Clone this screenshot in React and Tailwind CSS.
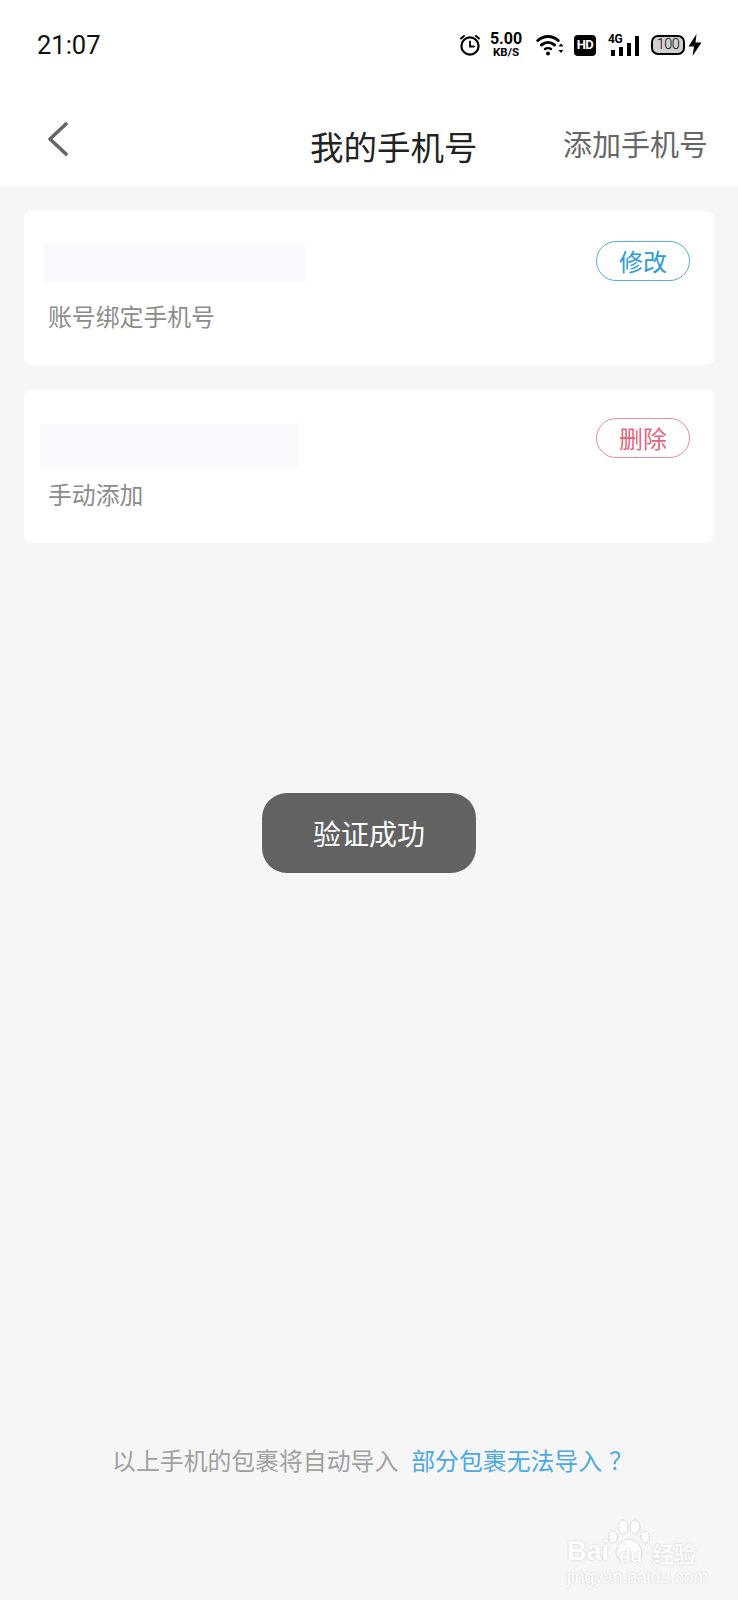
const CARDS = [
  { patch: 'mt-[33px] -ml-1 h-[38px] w-[261px]', labelTop: 'mt-[17px]', label: '账号绑定手机号', btnTop: 'mt-[30px]', btn: '修改', btnColor: 'border-[#52aedb] text-[#2a9bdc]' },
  { patch: 'mt-[35px] -ml-2 h-[43px] w-[259px]', labelTop: 'mt-[10px]', label: '手动添加', btnTop: 'mt-[29px]', btn: '删除', btnColor: 'border-[#e98c9b] text-[#e2667c]' },
]

function StatusIcons() {
  return (
    <div className="flex items-center text-black">
      {/* alarm */}
      <svg width="22" height="24" viewBox="0 0 22 24" fill="none" stroke="currentColor" strokeLinecap="round">
        <circle cx="11" cy="13" r="8.6" strokeWidth="2.2" />
        <path d="M11 8.5V13.5H15" strokeWidth="1.8" />
        <path d="M2 5.5 5 3M20 5.5 17 3" strokeWidth="2" />
      </svg>
      <div className="ml-[8px] flex w-[34px] flex-col items-center font-bold leading-none">
        <span className="text-[16px] leading-[14px] [font-family:Roboto,sans-serif]">5.00</span>
        <span className="text-[11.5px] leading-[12px] [font-family:Roboto,sans-serif]">KB/S</span>
      </div>
      {/* wifi */}
      <svg className="ml-[13px]" width="28" height="22" viewBox="0 0 28 22" fill="none" stroke="currentColor" strokeWidth="3" strokeLinecap="round">
        <path d="M1.8 6.5C7.5 1 16.5 1 22.2 6.5" />
        <path d="M5.5 11C9.5 7.5 14.5 7.5 18.5 11" />
        <path d="M9 15C10.5 13.8 13.5 13.8 15 15" strokeWidth="2.4" />
        <circle cx="12" cy="19.5" r="2" fill="currentColor" stroke="none" />
        <path d="M22.5 12.5 25 9.5 27.5 12.5Z M22.5 16 25 19 27.5 16Z" fill="currentColor" stroke="none" />
      </svg>
      <div className="ml-[10px] flex h-[21px] w-[22px] items-center justify-center rounded-[4px] bg-black text-[13px] font-bold tracking-[-0.5px] text-white [font-family:Roboto,sans-serif]">
        HD
      </div>
      {/* 4G signal */}
      <div className="relative ml-[12px] h-[22px] w-[31px]">
        <span className="absolute left-0 top-0 text-[12px] font-bold leading-[11px] tracking-[-0.5px] [font-family:Roboto,sans-serif]">4G</span>
        <div className="absolute bottom-0 right-0 flex items-end gap-[4px]">
          <div className="h-[6px] w-[4px] bg-black" />
          <div className="h-[9px] w-[4px] bg-black" />
          <div className="h-[13px] w-[4px] bg-black" />
          <div className="h-[20px] w-[4px] bg-black" />
        </div>
      </div>
      {/* battery */}
      <div className="ml-[12px] flex h-[20px] w-[34px] items-center justify-center rounded-[7px] border-2 border-black bg-[#d0d0d0] pt-[1px] text-[14.5px] font-light leading-none tracking-[-0.5px] [font-family:Roboto,sans-serif]">
        100
      </div>
      <svg className="ml-[3px]" width="14" height="22" viewBox="0 0 14 22" fill="currentColor">
        <path d="M8.5 0 0.5 12.5H6L4.5 22 13.5 8.5H7.5Z" />
      </svg>
    </div>
  )
}

function Watermark() {
  return (
    <div className="pointer-events-none absolute left-[567px] top-[1518px] h-[68px] w-[135px] text-white">
      <svg className="absolute left-[40px] top-0" width="44" height="44" viewBox="0 0 44 44" fill="#fdfdfd" stroke="#dcdcdc" strokeWidth="1">
        <ellipse cx="16" cy="9" rx="5" ry="7" />
        <ellipse cx="28" cy="9" rx="5" ry="7" />
        <ellipse cx="6" cy="19" rx="4.5" ry="6" />
        <ellipse cx="38" cy="19" rx="4.5" ry="6" />
        <path d="M22 21C14 21 9 30 9 35C9 41 14 43 22 43C30 43 35 41 35 35C35 30 30 21 22 21Z" />
      </svg>
      <span className="absolute left-0 top-[20px] text-[27px] font-bold leading-[26px] [font-family:'Liberation_Sans',sans-serif] [text-shadow:0_0_2px_#c4c4c4]">Bai</span>
      <span className="absolute left-[52px] top-[28px] text-[19px] font-bold leading-[20px] text-white [font-family:'Liberation_Sans',sans-serif] [text-shadow:0_0_2px_#bdbdbd]">du</span>
      <span className="absolute left-[85px] top-[21px] text-[22px] font-bold leading-[26px] [font-family:'Noto_Sans_CJK_SC',sans-serif] [text-shadow:0_0_2px_#c4c4c4]">经验</span>
      <span className="absolute left-0 top-[50px] text-[17.5px] leading-[18px] [font-family:'Liberation_Sans',sans-serif] [text-shadow:0_0_2px_#cccccc]">jingyan.baidu.com</span>
    </div>
  )
}

export default function App() {
  return (
    <div className="relative flex h-[1600px] w-[738px] flex-col overflow-hidden bg-[#f6f6f6] [font-family:'Noto_Sans_CJK_SC',sans-serif]">
      {/* Status bar + nav */}
      <div className="bg-white">
        <div className="flex h-[90px] items-center justify-between pl-[37px] pr-[36px]">
          <span className="mt-[2px] text-[25.5px] leading-none text-[#111] [font-family:Roboto,sans-serif]">21:07</span>
          <StatusIcons />
        </div>
        <div className="flex h-[97px] items-start pl-[48px] pr-[30px]">
          <svg className="mt-[32px] text-[#666]" width="22" height="34" viewBox="0 0 22 34" fill="none" stroke="currentColor" strokeWidth="3.6" strokeLinecap="round" strokeLinejoin="round">
            <path d="M18 2 2 17 18 32" />
          </svg>
          <span className="ml-[240px] mt-[35px] text-[33.5px] leading-[42px] text-[#222]">我的手机号</span>
          <span className="ml-auto mt-[33px] text-[29px] leading-[40px] text-[#666]">添加手机号</span>
        </div>
      </div>

      {/* Phone cards */}
      <div className="flex flex-col gap-6 px-6 pt-6">
        {CARDS.map((c) => (
          <div key={c.label} className="flex h-[154px] justify-between rounded-lg bg-white px-6">
            <div>
              <div className={`${c.patch} bg-[#f8f9fc]`} />
              <p className={`${c.labelTop} text-[23.85px] leading-[34px] text-[#8c8c8c]`}>{c.label}</p>
            </div>
            <button className={`${c.btnTop} ${c.btnColor} flex h-[40px] w-[94px] items-center justify-center rounded-full border text-[24px] leading-none`}>
              {c.btn}
            </button>
          </div>
        ))}
      </div>

      {/* Footer hint */}
      <div className="mt-auto flex justify-center gap-[13px] pb-[123px] pl-[7px] text-[23.85px] leading-[34px]">
        <span className="text-[#a0a0a0]">以上手机的包裹将自动导入</span>
        <span className="text-[#4aa8e4]">
          部分包裹无法导入<span className="ml-[7px]">？</span>
        </span>
      </div>

      {/* Toast */}
      <div className="absolute left-[262px] top-[793px] flex h-[80px] w-[214px] items-center justify-center rounded-[25px] bg-[#626262] text-[28px] leading-none text-white">
        验证成功
      </div>

      <Watermark />
    </div>
  )
}
